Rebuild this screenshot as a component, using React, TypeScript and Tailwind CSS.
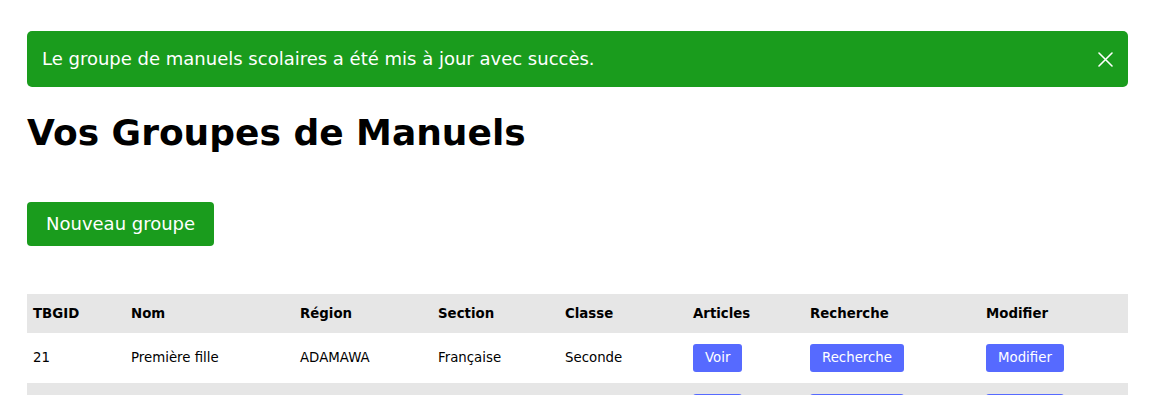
type Group = {
  id: number;
  name: string;
  region: string;
  section: string;
  classe: string;
};

const groups: Group[] = [
  { id: 21, name: 'Première fille', region: 'ADAMAWA', section: 'Française', classe: 'Seconde' },
  { id: 22, name: 'Terminale garçons', region: 'CENTRE', section: 'Française', classe: 'Terminale' },
];

const cols = 'grid grid-cols-[98px_169px_138px_127px_128px_117px_176px_148px]';

function SmallButton({ label }: { label: string }) {
  return (
    <button className="h-[28px] px-[12px] rounded-[3px] bg-[#566aff] text-white text-[13.33px] leading-none">
      {label}
    </button>
  );
}

function App() {
  return (
    <div className="min-h-screen bg-white text-black font-['DejaVu_Sans',sans-serif]">
      <div className="pl-[27px] pt-[31px] pr-[30px]">
        {/* Alert */}
        <div className="flex items-center justify-between h-[56px] pl-[15px] pr-[15px] rounded-[5px] bg-[#1a9c1d] text-white">
          <p className="text-lg leading-7">
            Le groupe de manuels scolaires a été mis à jour avec succès.
          </p>
          <button className="text-white" aria-label="Fermer">
            <svg width="15" height="15" viewBox="0 0 15 15" fill="none" stroke="currentColor" strokeWidth="1.6" strokeLinecap="round">
              <path d="M1 1l13 13M14 1L1 14" />
            </svg>
          </button>
        </div>

        <h1 className="mt-[26px] text-[36px] leading-[40px] font-bold">Vos Groupes de Manuels</h1>

        <button className="mt-[49px] h-[44px] px-[19px] rounded-[4px] bg-[#1a9c1d] text-white text-lg leading-7">
          Nouveau groupe
        </button>

        {/* Table */}
        <div className="mt-[48px] text-[13.33px]">
          <div className={`${cols} h-[39px] items-center bg-[#e6e6e6] font-bold`}>
            {['TBGID', 'Nom', 'Région', 'Section', 'Classe', 'Articles', 'Recherche', 'Modifier'].map((h) => (
              <div key={h} className="pl-[6px]">{h}</div>
            ))}
          </div>
          {groups.map((g, i) => (
            <div key={g.id} className={`${cols} h-[50px] items-center ${i % 2 === 1 ? 'bg-[#e6e6e6]' : 'bg-white'}`}>
              <div className="pl-[6px]">{g.id}</div>
              <div className="pl-[6px]">{g.name}</div>
              <div className="pl-[6px]">{g.region}</div>
              <div className="pl-[6px]">{g.section}</div>
              <div className="pl-[6px]">{g.classe}</div>
              <div className="pl-[6px]"><SmallButton label="Voir" /></div>
              <div className="pl-[6px]"><SmallButton label="Recherche" /></div>
              <div className="pl-[6px]"><SmallButton label="Modifier" /></div>
            </div>
          ))}
        </div>
      </div>
    </div>
  );
}

export default App;
